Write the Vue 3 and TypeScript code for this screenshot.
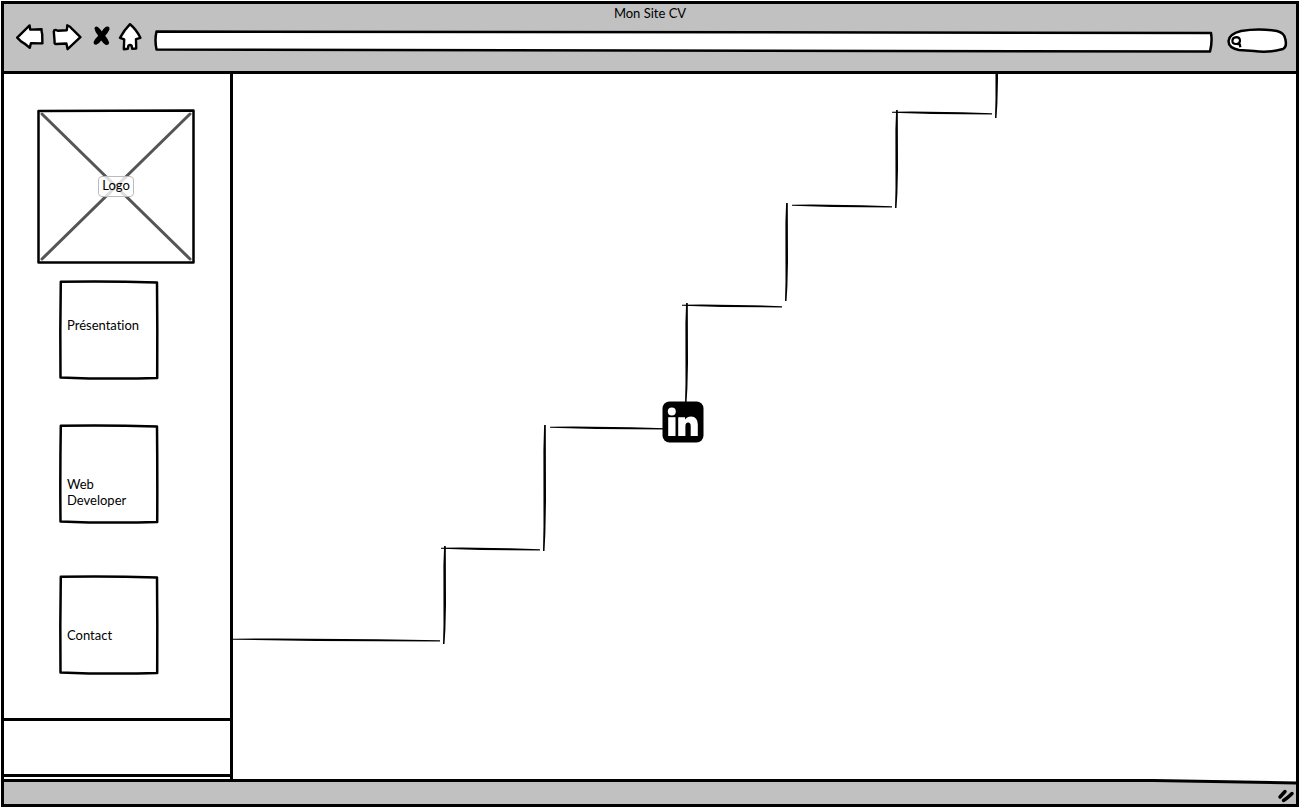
<script setup lang="ts">
import { ref } from 'vue'

interface NavItem {
  id: string
  label: string
}

interface Stroke {
  x: number
  y: number
  length: number
}

const address = ref('')
const query = ref('')

const navItems: NavItem[] = [
  { id: 'presentation', label: 'Présentation' },
  { id: 'developer', label: 'Web Developer' },
  { id: 'contact', label: 'Contact' },
]

const treads: Stroke[] = [
  { x: 0, y: 565, length: 207 },
  { x: 208, y: 474, length: 99 },
  { x: 317, y: 353, length: 116 },
  { x: 449, y: 231, length: 100 },
  { x: 559, y: 131, length: 100 },
  { x: 659, y: 38, length: 100 },
]

const risers: Stroke[] = [
  { x: 212, y: 472, length: 98 },
  { x: 312, y: 351, length: 126 },
  { x: 454, y: 229, length: 100 },
  { x: 554, y: 129, length: 98 },
  { x: 664, y: 36, length: 98 },
  { x: 764, y: -54, length: 98 },
]

// Pen strokes that are thin at both ends and thicker in the middle
function treadPath({ x, y, length: l }: Stroke): string {
  return `M${x} ${y - 0.3} L${x + l * 0.2} ${y - 0.6} L${x + l * 0.7} ${y + 0.2} L${x + l} ${y + 1.2} V${y + 2.4} L${x + l * 0.4} ${y + 1.9} L${x} ${y + 0.7} Z`
}

function riserPath({ x, y, length: l }: Stroke): string {
  return `M${x - 0.9} ${y} L${x - 1.6} ${y + l * 0.2} L${x - 1.5} ${y + l * 0.8} L${x - 2} ${y + l} H${x - 0.5} L${x + 0.4} ${y + l * 0.85} L${x + 1} ${y + l * 0.6} L${x + 0.8} ${y} Z`
}
</script>

<template>
  <div class="window">
    <header class="chrome">
      <h1 class="title">Mon Site CV</h1>
      <div class="toolbar">
        <button class="tool back" type="button" aria-label="Back">
          <svg width="28" height="36" viewBox="16 23 28 36">
            <path d="M17.2 37.6 L29.6 25.4 L30.2 29.6 L41.6 29.2 Q41.4 32 42.2 34 L42.4 43.4 L30.9 43.2 L29.8 47.8 Q25 43.6 21 41.4 Z" />
          </svg>
        </button>
        <button class="tool forward" type="button" aria-label="Forward">
          <svg width="30" height="36" viewBox="52 23 30 36">
            <path d="M53.8 31.4 Q54 29.8 56 30 L58 30.8 L66.8 30.2 L67.3 25.3 Q70 26 72.6 29.4 L80.4 37.2 L67.6 49.2 L66.4 43.5 L56 44 Q54.2 44 54.6 41.6 Z" />
          </svg>
        </button>
        <button class="tool stop" type="button" aria-label="Stop">
          <svg width="18" height="36" viewBox="92 23 18 36">
            <path class="ink" d="M94.4 28.2 Q95.4 25.4 98.4 27.4 Q100.6 29.4 101.9 31.6 Q104 27.4 107 26.6 Q110 26.2 109.4 29.8 Q107.7 33.2 105.2 35.8 Q108 39.2 109.2 42.4 Q108.9 45.6 105.4 44.8 Q102.8 43 101.2 40.6 Q99.2 43.8 96.2 44.8 Q93.2 44.9 93.7 41.8 Q95.3 38.4 98.2 35.8 Q95.2 32.6 94.4 28.2 Z" />
          </svg>
        </button>
        <button class="tool home" type="button" aria-label="Home">
          <svg width="24" height="36" viewBox="118 23 24 36">
            <path d="M130 24.2 Q124.5 29.8 120 37.8 L124.2 39.4 L123.8 49.2 L127.8 48.8 L128.4 45.6 Q130 44.2 131.6 45.6 L132.2 48.8 L136.2 48.6 L136 39.2 L140.4 37.8 Q136.4 29.4 130 24.2 Z" />
          </svg>
        </button>
        <div class="address">
          <svg class="outline" viewBox="0 0 1059 23" preserveAspectRatio="none" aria-hidden="true">
            <path d="M2.5 1.5 L1057 3 Q1058.5 12 1056 21.5 L2.5 19.5 Q0.5 10 2.5 1.5 Z" />
          </svg>
          <input v-model="address" type="text" aria-label="Address" />
        </div>
        <div class="search">
          <svg class="outline" viewBox="0 0 61 28" preserveAspectRatio="none" aria-hidden="true">
            <path d="M14 4 Q32 1 50 4 Q58 6 58.5 13 Q60 20 56 22 Q42 26 27 24 L12 23 Q1.5 21 1.5 14 Q2 7 14 4 Z" />
          </svg>
          <svg class="lens" width="11" height="12" viewBox="0 0 11 12" aria-hidden="true">
            <path d="M5.2 1.2 Q9 1.2 9 4.8 Q8.6 8.2 5 8 Q1.2 8 1.4 4.6 Q1.6 1.6 5.2 1.2 Z M6 7.8 L8.8 8.4 L9.4 11.2" />
          </svg>
          <input v-model="query" type="search" aria-label="Search" />
        </div>
      </div>
    </header>

    <div class="body">
      <aside class="sidebar">
        <div class="logo">
          <svg class="outline" viewBox="0 0 158 155" preserveAspectRatio="none" aria-hidden="true">
            <path d="M1.5 2 L156.5 1.5 V153.5 L1.5 153.5 Z" />
          </svg>
          <svg class="cross" viewBox="0 0 158 155" preserveAspectRatio="none" aria-hidden="true">
            <path d="M5 5 L153 150 M153 5 L5 150" />
          </svg>
          <span class="logo-label">Logo</span>
        </div>
        <nav class="menu">
          <button v-for="item in navItems" :key="item.id" type="button" :class="['card', item.id]">
            <svg class="outline" viewBox="0 0 100 99" preserveAspectRatio="none" aria-hidden="true">
              <path d="M1.8 1.8 Q50 1 98 2.5 Q98.5 50 98.2 98 Q50 99.4 1.5 97.4 Q1 50 1.8 1.8 Z" />
            </svg>
            <span>{{ item.label }}</span>
          </button>
        </nav>
        <div class="panel"></div>
      </aside>

      <main class="canvas">
        <svg class="stairs" aria-hidden="true">
          <path v-for="(tread, i) in treads" :key="`t${i}`" :d="treadPath(tread)" />
          <path v-for="(riser, i) in risers" :key="`r${i}`" :d="riserPath(riser)" />
        </svg>
        <a class="linkedin" href="#linkedin" aria-label="LinkedIn">
          <svg width="42" height="42" viewBox="0 0 42 42">
            <rect x="0.5" y="0.5" width="41" height="41" rx="7" />
            <g fill="#fff">
              <circle cx="9.8" cy="10.5" r="4" />
              <rect x="6.2" y="16.2" width="7.3" height="18.8" />
              <path d="M16.2 16.2 H23 V18.5 Q25.2 15.4 29 15.4 Q35.8 15.6 35.8 23.5 V35 H28.7 V25 Q28.7 21.5 26.1 21.5 Q23.4 21.7 23.4 25 V35 H16.2 Z" />
            </g>
          </svg>
        </a>
      </main>
    </div>

    <footer class="status">
      <svg class="edge" viewBox="0 0 1293 6" preserveAspectRatio="none" aria-hidden="true">
        <path class="above" d="M0 0 H1293 V4 L1195 1.5 H0 Z" />
        <path class="line" d="M0 1.5 H1150 L1293 4" />
      </svg>
      <svg class="grip" width="18" height="15" viewBox="0 0 18 15" aria-hidden="true">
        <path d="M3 9 L8 3.5 M6.5 12.5 Q10 10.5 15 5.5" />
      </svg>
    </footer>
  </div>
</template>

<style>
body {
  margin: 0;
  background: #fff;
}
</style>

<style scoped>
.window {
  box-sizing: border-box;
  display: flex;
  flex-direction: column;
  min-height: 100vh;
  padding: 4px;
  outline: 3px solid #000;
  outline-offset: -4px;
  color: #000;
  background: #fff;
  font-family: Lato, "Liberation Sans", sans-serif;
  font-size: 13px;
  font-variant-ligatures: none;
  line-height: 16px;
}

button,
input {
  margin: 0;
  padding: 0;
  border: 0;
  background: none;
  color: inherit;
  font: inherit;
  font-variant-ligatures: none;
}

.outline {
  position: absolute;
  inset: 0;
  width: 100%;
  height: 100%;
  overflow: visible;
  fill: #fff;
  stroke: #000;
  stroke-width: 2.5;
  stroke-linejoin: round;
}

.outline path {
  vector-effect: non-scaling-stroke;
}

.chrome {
  box-sizing: border-box;
  height: 70px;
  border-bottom: 3px solid #000;
  background: #c1c1c1;
}

.title {
  margin: 0;
  font-size: 13px;
  font-weight: 400;
  line-height: 19px;
  text-align: center;
}

.toolbar {
  display: flex;
  align-items: center;
  padding: 0 8px 0 12px;
}

.tool {
  display: block;
  height: 36px;
}

.tool svg {
  display: block;
  fill: #fff;
  stroke: #000;
  stroke-width: 2.4;
  stroke-linejoin: round;
}

.tool .ink {
  fill: #000;
  stroke: none;
}

.forward,
.home {
  margin-left: 8px;
}

.stop {
  margin-left: 10px;
}

.address {
  position: relative;
  flex: 1;
  height: 23px;
  margin-left: 12px;
}

.search {
  position: relative;
  width: 61px;
  height: 28px;
  margin-left: 14px;
}

.address input,
.search input {
  position: relative;
  box-sizing: border-box;
  display: block;
  width: 100%;
  height: 100%;
  padding: 0 8px;
  outline: 0;
}

.search input {
  padding-left: 16px;
  appearance: none;
}

.lens {
  position: absolute;
  left: 4px;
  top: 9px;
  fill: none;
  stroke: #000;
  stroke-width: 2.2;
}

.body {
  display: flex;
  flex: 1;
}

.sidebar {
  box-sizing: border-box;
  display: flex;
  flex-direction: column;
  width: 229px;
  padding: 35px 0 2px;
  border-right: 3px solid #000;
}

.logo {
  position: relative;
  box-sizing: border-box;
  display: flex;
  align-items: center;
  justify-content: center;
  width: 158px;
  height: 155px;
  margin-left: 33px;
}

.cross {
  position: absolute;
  inset: 0;
  width: 100%;
  height: 100%;
  fill: none;
  stroke: #555;
  stroke-width: 3;
  stroke-linecap: round;
}

.logo-label {
  position: relative;
  padding: 0 3px 3px;
  border: 1px solid #bbb;
  border-radius: 4px;
  background: rgba(255, 255, 255, 0.8);
}

.menu {
  display: flex;
  flex-direction: column;
  padding: 16px 0 44px 55px;
}

.card {
  position: relative;
  box-sizing: border-box;
  display: flex;
  width: 100px;
  height: 99px;
  padding: 52px 8px 0;
  text-align: left;
}

.card span {
  position: relative;
}

.presentation {
  padding-top: 37px;
}

.developer {
  margin-top: 45px;
  padding-right: 30px;
}

.contact {
  margin-top: 52px;
}

.panel {
  flex: 1;
  border-top: 3px solid #000;
  border-bottom: 3px solid #000;
}

.canvas {
  position: relative;
  flex: 1;
  overflow: hidden;
}

.stairs {
  position: absolute;
  inset: 0;
  width: 100%;
  height: 100%;
}

.linkedin {
  position: absolute;
  left: 429px;
  top: 327px;
}

.linkedin svg {
  display: block;
}

.status {
  position: relative;
  height: 25px;
  background: #c1c1c1;
}

.edge {
  display: block;
  width: 100%;
  height: 6px;
}

.above {
  fill: #fff;
}

.line {
  fill: none;
  stroke: #000;
  stroke-width: 3;
}

.grip {
  position: absolute;
  right: 1px;
  bottom: 1px;
  fill: none;
  stroke: #000;
  stroke-width: 3.5;
  stroke-linecap: round;
}
</style>
